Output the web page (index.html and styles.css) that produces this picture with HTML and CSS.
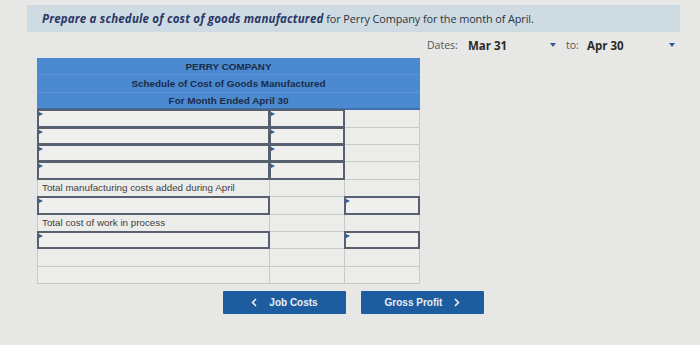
FILE: index.html
```html
<!DOCTYPE html>
<html>
<head>
<meta charset="utf-8">
<link rel="stylesheet" href="styles.css">
</head>
<body>
<div class="page">
  <div class="banner"><b><i>Prepare a schedule of cost of goods manufactured</i></b> for Perry Company for the month of April.</div>
  <div class="dates">
    <span class="lbl">Dates:</span>
    <div class="sel s1"><span>Mar 31</span><span class="caret"></span></div>
    <span class="lbl to">to:</span>
    <div class="sel s2"><span>Apr 30</span><span class="caret"></span></div>
  </div>
  <div class="sheet">
    <div class="hdr">PERRY COMPANY</div>
    <div class="hdr">Schedule of Cost of Goods Manufactured</div>
    <div class="hdr">For Month Ended April 30</div>

    <div class="cell"><div class="inp"></div></div><div class="cell"><div class="inp"></div></div><div class="cell"></div>
    <div class="cell"><div class="inp"></div></div><div class="cell"><div class="inp"></div></div><div class="cell"></div>
    <div class="cell"><div class="inp"></div></div><div class="cell"><div class="inp"></div></div><div class="cell"></div>
    <div class="cell"><div class="inp"></div></div><div class="cell"><div class="inp"></div></div><div class="cell"></div>

    <div class="cell label">Total manufacturing costs added during April</div><div class="cell"></div><div class="cell"></div>
    <div class="cell"><div class="inp"></div></div><div class="cell"></div><div class="cell"><div class="inp"></div></div>

    <div class="cell label">Total cost of work in process</div><div class="cell"></div><div class="cell"></div>
    <div class="cell"><div class="inp"></div></div><div class="cell"></div><div class="cell"><div class="inp"></div></div>

    <div class="cell"></div><div class="cell"></div><div class="cell"></div>
    <div class="cell"></div><div class="cell"></div><div class="cell"></div>
  </div>
  <div class="nav">
    <button class="btn"><svg class="chev" width="6" height="9" viewBox="0 0 6 9"><path d="M5 1 L1.5 4.5 L5 8" fill="none" stroke="#e9eef5" stroke-width="1.6"/></svg><span>Job Costs</span></button>
    <button class="btn"><span>Gross Profit</span><svg class="chev" width="6" height="9" viewBox="0 0 6 9"><path d="M1 1 L4.5 4.5 L1 8" fill="none" stroke="#e9eef5" stroke-width="1.6"/></svg></button>
  </div>
</div>
</body>
</html>
```

FILE: styles.css
```css
html, body {
  margin: 0;
  padding: 0;
  background: #e7e7e5;
}
.page {
  width: 700px;
  height: 345px;
  padding-top: 5px;
  box-sizing: border-box;
  font-family: "Liberation Sans", Arial, sans-serif;
}
.banner {
  margin-left: 27px;
  width: 653px;
  height: 27px;
  box-sizing: border-box;
  padding: 6px 0 0 15px;
  background: #cedbe3;
  font-family: "Open Sans", sans-serif;
  font-size: 10.9px;
  color: #2c3440;
  letter-spacing: -0.1px;
}
.banner b {
  color: #2a3766;
  font-weight: 700;
  font-size: 11.5px;
  letter-spacing: 0.18px;
}
.dates {
  display: flex;
  align-items: center;
  height: 26px;
  margin-left: 427px;
  width: 253px;
  font-family: "Open Sans", sans-serif;
  font-size: 10.5px;
  color: #555;
}
.lbl {
  width: 41px;
}
.lbl.to {
  width: 21px;
}
.sel {
  display: flex;
  align-items: center;
  justify-content: space-between;
  box-sizing: border-box;
  font-weight: 700;
  color: #2b2b2b;
  font-size: 11.5px;
}
.s1 {
  width: 98px;
  padding-right: 10px;
}
.s2 {
  width: 93px;
  padding-right: 5px;
}
.caret {
  width: 0;
  height: 0;
  border-left: 3.5px solid transparent;
  border-right: 3.5px solid transparent;
  border-top: 4px solid #2d5d9a;
}
.sheet {
  margin-left: 37px;
  display: grid;
  grid-template-columns: 233px 75px 75px;
  grid-auto-rows: 17.4px;
  width: 383px;
}
.hdr {
  grid-column: 1 / 4;
  background: #4b8ad1;
  color: #1c2b45;
  font-weight: 700;
  font-size: 9.9px;
  display: flex;
  align-items: center;
  justify-content: center;
  border-bottom: 1px solid #5c95d6;
  box-sizing: border-box;
}
.hdr:nth-child(3) {
  border-bottom: 2px solid #3e6fae;
}
.cell {
  box-sizing: border-box;
  border-right: 1px solid #c9c9c7;
  border-bottom: 1px solid #c9c9c7;
  background: #ececea;
  position: relative;
}
.cell:nth-child(3n+1) {
  border-left: 1px solid #c9c9c7;
}
.label {
  font-size: 9.8px;
  color: #3e3e3e;
  padding: 2px 0 0 4px;
  white-space: nowrap;
}
.inp {
  position: absolute;
  inset: -1px -1px -1px -1px;
  border: 2px solid #56606e;
  background: #efefed;
}
.inp::before {
  content: "";
  position: absolute;
  left: 0;
  top: 1px;
  border-top: 2.5px solid transparent;
  border-bottom: 2.5px solid transparent;
  border-left: 4px solid #2a5aa0;
}
.nav {
  display: flex;
  gap: 15px;
  margin: 7px 0 0 223px;
}
.btn {
  width: 123px;
  height: 23px;
  border: none;
  border-radius: 1px;
  background: #1d5c9e;
  color: #e9eef5;
  font-family: "Liberation Sans", Arial, sans-serif;
  font-weight: 700;
  font-size: 10px;
  display: flex;
  align-items: center;
  justify-content: center;
  gap: 12px;
  padding: 0;
}
.chev {
  display: block;
}
```
